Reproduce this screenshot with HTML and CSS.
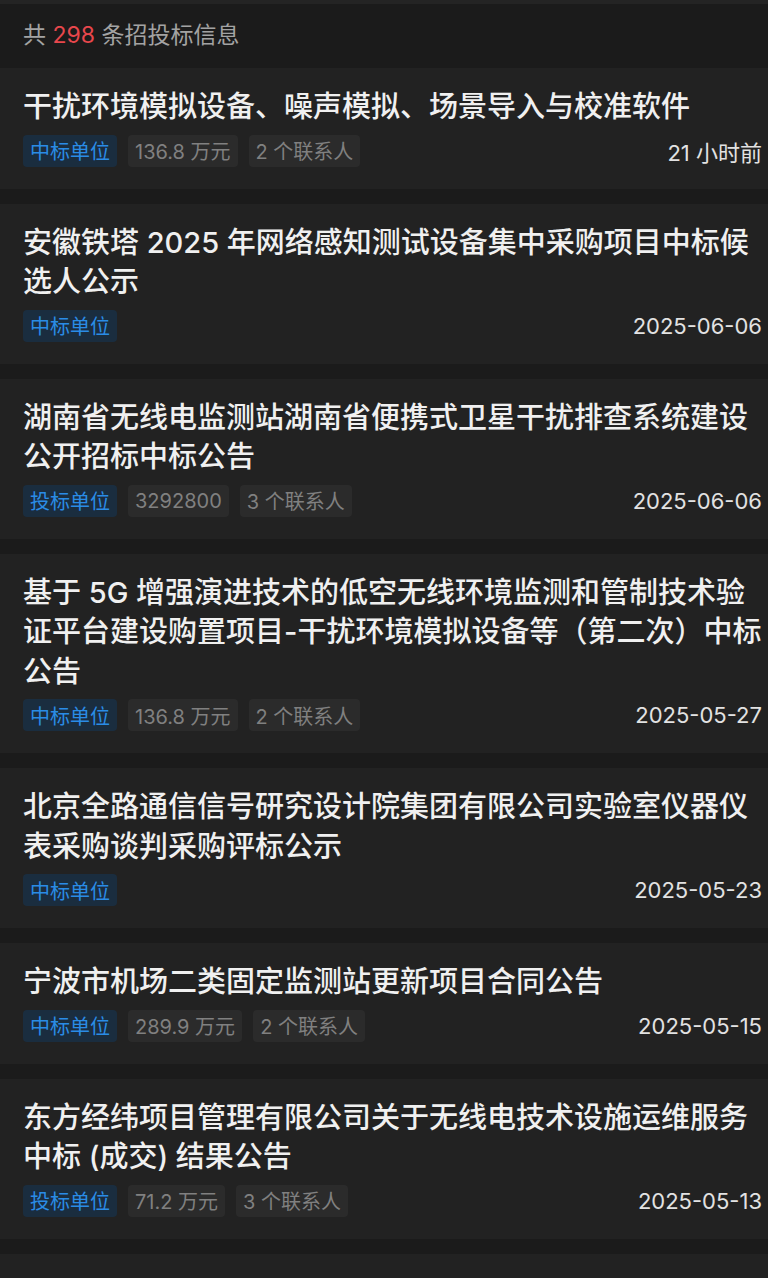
FILE: index.html
```html
<!DOCTYPE html>
<html lang="zh-CN">
<head>
<meta charset="utf-8">
<title>招投标信息</title>
<link rel="stylesheet" href="styles.css">
</head>
<body>
<div class="top-edge"></div>
<div class="summary">共 <span class="count">298</span> 条招投标信息</div>
<div class="list">
  <div class="card">
    <div class="title">干扰环境模拟设备、噪声模拟、场景导入与校准软件</div>
    <div class="meta">
      <div class="tags">
        <span class="tag tag-blue">中标单位</span>
        <span class="tag">136.8 万元</span>
        <span class="tag">2 个联系人</span>
      </div>
      <span class="date">21 小时前</span>
    </div>
  </div>
  <div class="card">
    <div class="title">安徽铁塔 2025 年网络感知测试设备集中采购项目中标候选人公示</div>
    <div class="meta">
      <div class="tags">
        <span class="tag tag-blue">中标单位</span>
      </div>
      <span class="date">2025-06-06</span>
    </div>
  </div>
  <div class="card">
    <div class="title">湖南省无线电监测站湖南省便携式卫星干扰排查系统建设公开招标中标公告</div>
    <div class="meta">
      <div class="tags">
        <span class="tag tag-blue">投标单位</span>
        <span class="tag">3292800</span>
        <span class="tag">3 个联系人</span>
      </div>
      <span class="date">2025-06-06</span>
    </div>
  </div>
  <div class="card">
    <div class="title">基于 5G 增强演进技术的低空无线环境监测和管制技术验证平台建设购置项目-干扰环境模拟设备等（第二次）中标公告</div>
    <div class="meta">
      <div class="tags">
        <span class="tag tag-blue">中标单位</span>
        <span class="tag">136.8 万元</span>
        <span class="tag">2 个联系人</span>
      </div>
      <span class="date">2025-05-27</span>
    </div>
  </div>
  <div class="card">
    <div class="title">北京全路通信信号研究设计院集团有限公司实验室仪器仪表采购谈判采购评标公示</div>
    <div class="meta">
      <div class="tags">
        <span class="tag tag-blue">中标单位</span>
      </div>
      <span class="date">2025-05-23</span>
    </div>
  </div>
  <div class="card">
    <div class="title">宁波市机场二类固定监测站更新项目合同公告</div>
    <div class="meta">
      <div class="tags">
        <span class="tag tag-blue">中标单位</span>
        <span class="tag">289.9 万元</span>
        <span class="tag">2 个联系人</span>
      </div>
      <span class="date">2025-05-15</span>
    </div>
  </div>
  <div class="card">
    <div class="title">东方经纬项目管理有限公司关于无线电技术设施运维服务中标 (成交) 结果公告</div>
    <div class="meta">
      <div class="tags">
        <span class="tag tag-blue">投标单位</span>
        <span class="tag">71.2 万元</span>
        <span class="tag">3 个联系人</span>
      </div>
      <span class="date">2025-05-13</span>
    </div>
  </div>
  <div class="card card-empty"></div>
</div>
</body>
</html>
```

FILE: styles.css
```css
html, body {
  margin: 0;
  padding: 0;
  background: #1b1b1b;
  font-family: "Inter", "Noto Sans CJK SC", sans-serif;
  overflow: hidden;
}

.top-edge {
  height: 4px;
  background: #242424;
}

.summary {
  height: 64px;
  line-height: 62px;
  padding-left: 23px;
  font-size: 23px;
  color: #a3a3a3;
}

.count {
  color: #e8474c;
}

.list {
  display: flex;
  flex-direction: column;
  gap: 15px;
}

.card {
  background: #222222;
  padding: 19px 6px 22px 23px;
}

.card-empty {
  height: 40px;
}

.title {
  font-size: 29px;
  line-height: 39.5px;
  font-weight: 500;
  color: #f0f0f0;
}

.meta {
  margin-top: 8px;
  display: flex;
  align-items: center;
  justify-content: space-between;
}

.tags {
  display: flex;
  gap: 11px;
}

.tag {
  height: 32px;
  display: flex;
  align-items: center;
  padding: 0 7px;
  border-radius: 4px;
  background: #2b2b2b;
  color: #808080;
  font-size: 20px;
}

.tag-blue {
  background: #1a2d3f;
  color: #2a8ce6;
}

.date {
  font-size: 22px;
  color: #e2e2e2;
}
```
